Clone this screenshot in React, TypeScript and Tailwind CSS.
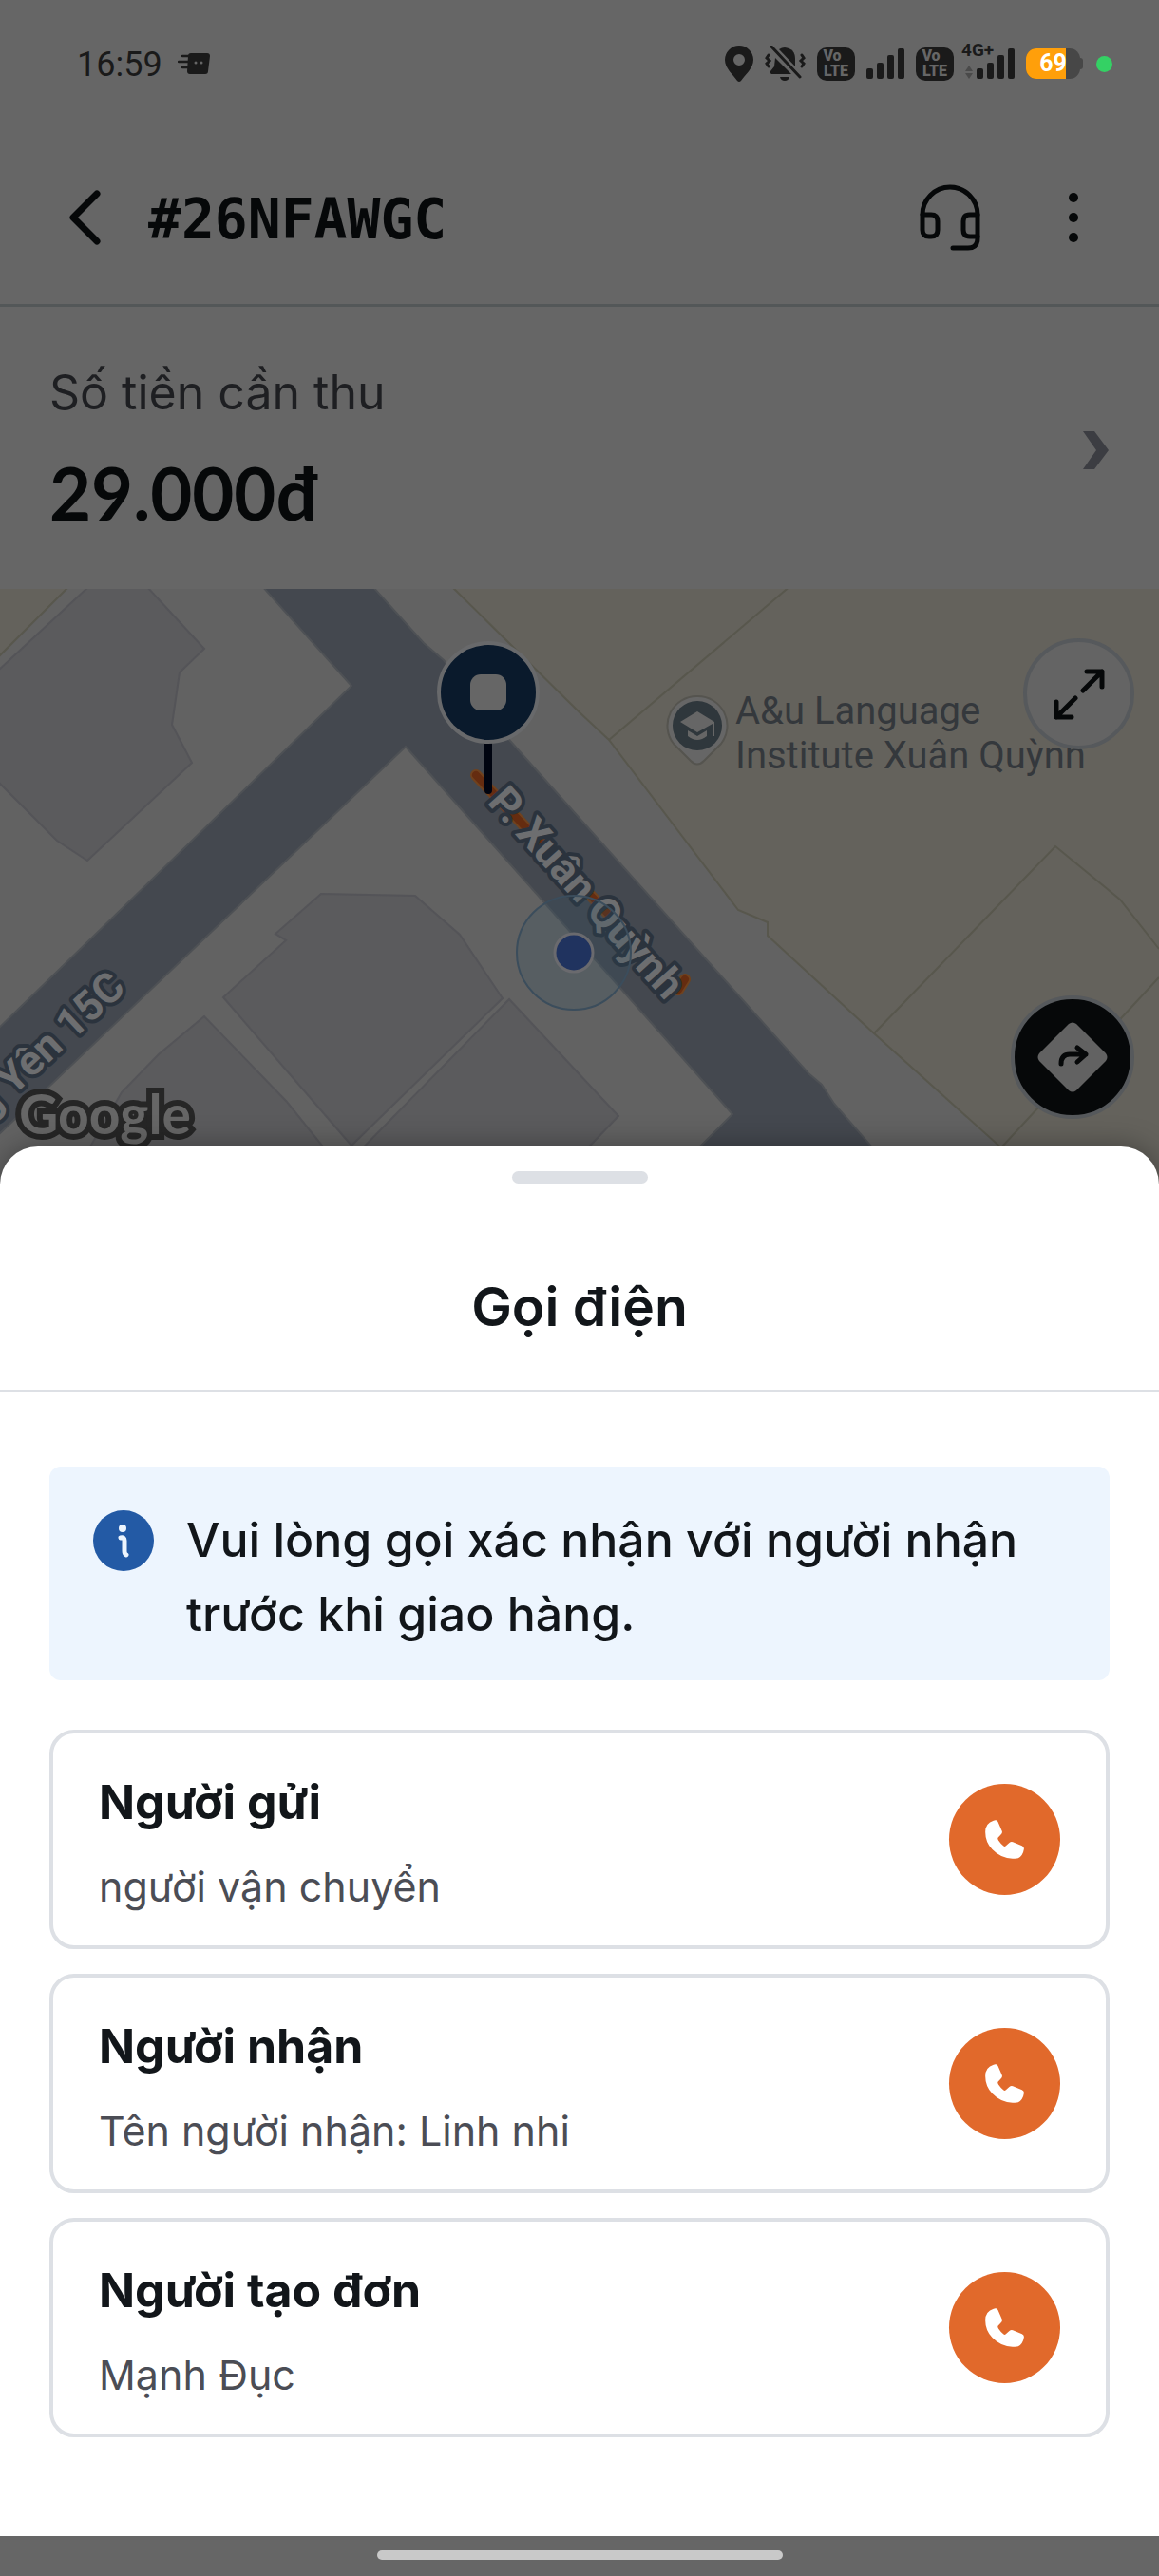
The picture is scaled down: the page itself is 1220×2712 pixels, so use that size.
import { useState } from 'react';

interface Contact {
  id: string;
  role: string;
  name: string;
}

const CONTACTS: Contact[] = [
  { id: 'sender', role: 'Người gửi', name: 'người vận chuyển' },
  { id: 'receiver', role: 'Người nhận', name: 'Tên người nhận: Linh nhi' },
  { id: 'creator', role: 'Người tạo đơn', name: 'Mạnh Đục' },
];

function VolteBadge() {
  return (
    <div className="flex h-[35px] w-10 flex-col items-center justify-center rounded-[10px] bg-[#1a1a1a] font-['Roboto',sans-serif] text-[16px] leading-4 font-black text-[#666666]">
      <span className="pr-2">Vo</span>
      <span>LTE</span>
    </div>
  );
}

function SignalBars() {
  return (
    <svg viewBox="0 0 40 32" className="h-8 w-10 fill-[#1a1a1a]">
      <rect x="0" y="21" width="7" height="11" rx="2" />
      <rect x="11" y="15" width="7" height="17" rx="2" />
      <rect x="22" y="7" width="7" height="25" rx="2" />
      <rect x="33" y="0" width="7" height="32" rx="2" />
    </svg>
  );
}

function StatusBar() {
  return (
    <div className="flex h-[134px] items-center justify-between pr-[49px] pl-[81px] font-['Roboto',sans-serif] text-[#1a1a1a]">
      <div className="flex items-center gap-4">
        <span className="pt-[2px] text-[36px] leading-10">16:59</span>
        <svg viewBox="0 0 34 24" className="h-6 w-[34px]">
          <path d="M14 1h17q3 0 3 3l-2 16q0 3-3 3H13q-3 0-3-3l1-16q0-3 3-3Z" fill="#1a1a1a" />
          <path d="M5 4h7M1 10h10M5 16h6" stroke="#1a1a1a" strokeWidth="2.5" strokeLinecap="round" />
          <circle cx="19" cy="11" r="1.5" fill="#666" />
          <circle cx="25" cy="11" r="1.5" fill="#666" />
        </svg>
      </div>

      <div className="flex items-center gap-3">
        <svg viewBox="0 0 30 38" className="h-[38px] w-[30px]">
          <path
            fillRule="evenodd"
            d="M15 0a15 15 0 0 1 15 15c0 9-9 16-13 22q-2 2-4 0C9 31 0 24 0 15A15 15 0 0 1 15 0Zm0 9a6 6 0 1 0 0 12a6 6 0 0 0 0-12Z"
            fill="#1a1a1a"
          />
        </svg>
        <svg viewBox="0 0 43 38" className="h-[38px] w-[43px]">
          <path d="M15 4q3-2 6-2q11 1 11 12v8L15 4Z" fill="#1a1a1a" />
          <path d="M11 13l17 17H7q-2-1-1-3l4-5Z" fill="#1a1a1a" />
          <path d="M16 33h10q-1 4-5 4t-5-4Z" fill="#1a1a1a" />
          <path
            d="M7 1l30 32M4 10l-2 3l3 3l-3 3l2 3M39 10l2 3l-3 3l3 3l-2 3"
            fill="none"
            stroke="#1a1a1a"
            strokeWidth="3"
            strokeLinecap="round"
          />
        </svg>
        <VolteBadge />
        <SignalBars />
        <VolteBadge />
        <div className="relative w-[52px] pl-3">
          <SignalBars />
          <span className="absolute -top-2 -left-1 text-[19px] leading-5 font-bold">4G+</span>
          <svg viewBox="0 0 8 14" className="absolute bottom-0 left-0 h-[14px] w-2 fill-[#4a4a4a]">
            <path d="M4 0l4 6H0ZM4 14l4-6H0Z" />
          </svg>
        </div>
        <div className="flex items-center">
          <div className="relative flex h-8 w-[57px] items-center justify-center overflow-hidden rounded-[11px] bg-[#474747]">
            <div className="absolute inset-y-0 left-0 w-[42px] bg-[#ff9f0a]" />
            <span className="relative text-[25px] leading-8 font-bold text-white">69</span>
          </div>
          <div className="h-3 w-[3px] rounded-r-full bg-[#474747]" />
        </div>
        <div className="ml-[2px] size-[17px] rounded-full bg-[#34d164]" />
      </div>
    </div>
  );
}

function OrderHeader() {
  return (
    <header className="flex h-[189px] items-center border-b-[3px] border-[#535758] pt-1 pr-[78px] pl-[72px] text-[#060809]">
      <button type="button" aria-label="Quay lại">
        <svg viewBox="0 0 34 58" className="h-[58px] w-[34px]">
          <path d="M30 4L5 29l25 25" fill="none" stroke="currentColor" strokeWidth="7" strokeLinecap="round" strokeLinejoin="round" />
        </svg>
      </button>
      <h1 className="ml-[50px] flex-1 pt-1 font-['DejaVu_Sans_Mono',monospace] text-[58px] leading-[72px] font-bold">
        #26NFAWGC
      </h1>
      <button type="button" aria-label="Hỗ trợ">
        <svg viewBox="0 0 64 70" className="h-[70px] w-16">
          <g fill="none" stroke="currentColor" strokeWidth="5" strokeLinecap="round" strokeLinejoin="round">
            <path d="M3 32a29 29 0 0 1 58 0v25q0 10-10 10H35" />
            <path d="M3 32h9q7 0 7 7v9q0 7-7 7h-2q-7 0-7-7Z" />
            <path d="M61 32h-8q-7 0-7 7v9q0 7 7 7h8" />
          </g>
        </svg>
      </button>
      <button type="button" aria-label="Thêm" className="ml-[86px]">
        <svg viewBox="0 0 24 54" className="h-[54px] w-6 fill-current">
          <circle cx="12" cy="6" r="5" />
          <circle cx="12" cy="27" r="5" />
          <circle cx="12" cy="48" r="5" />
        </svg>
      </button>
    </header>
  );
}

function AmountRow() {
  return (
    <section className="flex items-center justify-between px-[52px] pt-[58px] pb-[53px]">
      <div className="flex flex-col gap-[26px]">
        <p className="text-[50px] leading-[64px] text-[#1e1f22]">Số tiền cần thu</p>
        <p className="font-['Lato',sans-serif] text-[76px] leading-[96px] font-bold text-[#060809]">29.000đ</p>
      </div>
      <svg viewBox="0 0 28 40" className="h-10 w-7">
        <path d="M0 0h12l15 20l-15 20H0l14-20Z" fill="#3c3d42" />
      </svg>
    </section>
  );
}

function DeliveryMap() {
  return (
    <div className="relative h-[627px] overflow-hidden bg-[#626262]">
      <svg viewBox="0 0 1220 627" preserveAspectRatio="xMidYMid slice" className="block h-full w-full">
        {/* Land plots */}
        <g fill="#64625c" stroke="#58574d" strokeWidth="2">
          <path d="M-4-4H74L-4 74Z" />
          <path d="M474-4L610 130L641 159L777 338L808 351V365L920 468L1097 627H1230V-4Z" />
          <path d="M833-4L641 159M920 468L1111 271L1179 327L1220 379M1220 409L1018 627" fill="none" />
        </g>

        {/* Buildings */}
        <g fill="#5b5b5d" stroke="#545458" strokeWidth="2">
          <path d="M93-2H155L215 63L189 88L181 143L202 183L92 286L60 265L-2 203V86Z" />
          <path d="M338 321L437 323L484 364L529 431L370 586L235 430L301 370L290 363Z" />
          <path d="M215 450L167 490L128 530L72 627H372L302 540Z" />
          <path d="M536 432L651 555L582 627H344Z" />
        </g>

        {/* Roads */}
        <path
          d="M275-4L370 102L-4 465V577L427 166L771 553L697 627H952L878 542L865 522L851 510L537 160L467 75L446 57L391-4Z"
          fill="#44484f"
          stroke="#4e5155"
          strokeWidth="2"
        />

        {/* Route */}
        <g fill="none" strokeLinecap="round" strokeLinejoin="round">
          <path d="M501 196L560 258L640 342L714 422L721 411" stroke="#70421e" strokeWidth="12" />
          <path d="M501 196L560 258L640 342L714 422L721 411" stroke="#652c10" strokeWidth="8" />
        </g>

        {/* Drop-off pin */}
        <path d="M514 163V212" stroke="#000410" strokeWidth="8" strokeLinecap="round" />
        <circle cx="514" cy="109" r="52" fill="#0a1a2c" stroke="#68696b" strokeWidth="4" />
        <rect x="495" y="90" width="38" height="38" rx="11" fill="#666" />

        {/* Street names */}
        <g
          className="font-['Roboto',sans-serif] text-[44px] font-bold"
          fill="#6d6e70"
          stroke="#2b333d"
          strokeWidth="8"
          strokeLinejoin="round"
          paintOrder="stroke"
        >
          <text transform="translate(512 225) rotate(48)">P. Xuân Quỳnh</text>
          <text transform="translate(134 422) rotate(-43)" textAnchor="end">Trung Yên 15C</text>
        </g>

        {/* Current position */}
        <circle cx="604" cy="383" r="60" fill="#2f4f64" fillOpacity="0.2" stroke="#3b4d5c" strokeWidth="2" />
        <circle cx="604" cy="383" r="20" fill="#20335f" stroke="#6a6a6e" strokeWidth="3" />

        {/* School */}
        <path d="M734 113a31 31 0 0 1 25 50l-18 18q-7 7-14 0l-18-18a31 31 0 0 1 25-50Z" fill="#666" stroke="#55544f" strokeWidth="2" />
        <circle cx="734" cy="144" r="26" fill="#2f373c" />
        <path d="M716 140l18-11l18 11v15h-2v-13l-16 9ZM724 149l10 6l10-6v6q-10 8-20 0Z" fill="#666" />
        <g className="font-['Roboto',sans-serif] text-[40px]" fill="#34383c">
          <text x="774" y="142">A&amp;u Language</text>
          <text x="774" y="189">Institute Xuân Quỳnh</text>
        </g>

        <text
          x="20"
          y="574"
          className="font-['Lato',sans-serif] text-[57px] font-bold"
          fill="#666"
          stroke="#262626"
          strokeWidth="12"
          paintOrder="stroke"
        >
          Google
        </text>
      </svg>

      <button
        type="button"
        aria-label="Phóng to bản đồ"
        className="absolute top-[52px] right-[26px] flex size-[117px] items-center justify-center rounded-full border-4 border-[#56595c] bg-[#646464]"
      >
        <svg viewBox="0 0 54 54" className="size-[54px]">
          <path
            d="M31 23L51 3M35 3h16v16M23 31L3 51M3 35v16h16"
            fill="none"
            stroke="#060809"
            strokeWidth="5"
            strokeLinecap="round"
            strokeLinejoin="round"
          />
        </svg>
      </button>
      <button
        type="button"
        aria-label="Chỉ đường"
        className="absolute top-[428px] right-[26px] flex size-[130px] items-center justify-center rounded-full border-4 border-[#56595c] bg-[#060809]"
      >
        <svg viewBox="0 0 74 74" className="size-[74px]">
          <path d="M33 2q4-3 8 0l31 31q3 4 0 8L41 72q-4 3-8 0L2 41q-3-4 0-8Z" fill="#626262" />
          <path
            d="M25 44q0-10 9-10h17M42 27l9 7l-9 8"
            fill="none"
            stroke="#060809"
            strokeWidth="5"
            strokeLinecap="round"
            strokeLinejoin="round"
          />
        </svg>
      </button>
    </div>
  );
}

function ContactCard({ contact, onCall }: { contact: Contact; onCall: (id: string) => void }) {
  return (
    <li className="flex items-center justify-between rounded-[26px] border-4 border-[#dde0e5] px-12 py-9">
      <div className="flex flex-col gap-[27px]">
        <h3 className="text-[50px] leading-[72px] font-bold text-[#12161a]">{contact.role}</h3>
        <p className="text-[43px] leading-[52px] text-[#4b4d55]">{contact.name}</p>
      </div>
      <button
        type="button"
        aria-label={`Gọi ${contact.role}`}
        onClick={() => onCall(contact.id)}
        className="flex size-[117px] shrink-0 items-center justify-center rounded-full bg-[#e1692b]"
      >
        <svg viewBox="0 0 122 123" className="size-[41px]">
          <path
            d="M26 2L32 1Q37 0 40 6L53 36Q54 40 51 44L40 56Q38 60 42 65Q49 75 57 82Q61 86 65 82L76 72Q81 68 87 70L116 82Q123 85 122 92Q119 112 104 121Q98 123 86 122Q50 122 22 93Q0 70 0 38Q0 10 26 2Z"
            fill="white"
          />
        </svg>
      </button>
    </li>
  );
}

function CallSheet() {
  const [, setCalling] = useState<string | null>(null);

  return (
    <section
      aria-labelledby="call-title"
      className="relative -mt-10 rounded-t-[40px] bg-white pt-[26px] pb-[104px] shadow-[0_0_30px_rgba(0,0,0,0.35)]"
    >
      <div className="mx-auto h-[13px] w-[143px] rounded-full bg-[#dde0e5]" />
      <h2
        id="call-title"
        className="mt-[94px] border-b-[3px] border-[#dde0e5] pb-[51px] text-center text-[57px] leading-[72px] font-semibold text-[#12161a]"
      >
        Gọi điện
      </h2>

      <div className="px-[52px] pt-[78px]">
        <div className="flex items-start gap-[34px] rounded-xl bg-[#edf5fe] px-[46px] pt-[38px] pb-[31px]">
          <svg viewBox="0 0 64 64" className="mt-2 size-16 shrink-0">
            <circle cx="32" cy="32" r="32" fill="#235aa5" />
            <circle cx="31" cy="19" r="4" fill="#edf5fe" />
            <path d="M29 29q4-1 4 3v11q0 3 2 4" fill="none" stroke="#edf5fe" strokeWidth="5" strokeLinecap="round" strokeLinejoin="round" />
          </svg>
          <p className="text-[50px] leading-[78px] font-medium text-[#12161a]">
            Vui lòng gọi xác nhận với người nhận trước khi giao hàng.
          </p>
        </div>

        <ul className="mt-[52px] flex flex-col gap-[26px]">
          {CONTACTS.map((contact) => (
            <ContactCard key={contact.id} contact={contact} onCall={setCalling} />
          ))}
        </ul>
      </div>
    </section>
  );
}

export default function App() {
  return (
    <main className="bg-[#666666] font-['Inter',sans-serif]">
      <StatusBar />
      <OrderHeader />
      <AmountRow />
      <DeliveryMap />
      <CallSheet />
      {/* Gesture bar, stacked above the sheet's shadow */}
      <div className="relative flex h-[42px] items-start justify-center bg-[#666666] pt-[15px]">
        <div className="h-[10px] w-[427px] rounded-full bg-[#c9c9c9]" />
      </div>
    </main>
  );
}
